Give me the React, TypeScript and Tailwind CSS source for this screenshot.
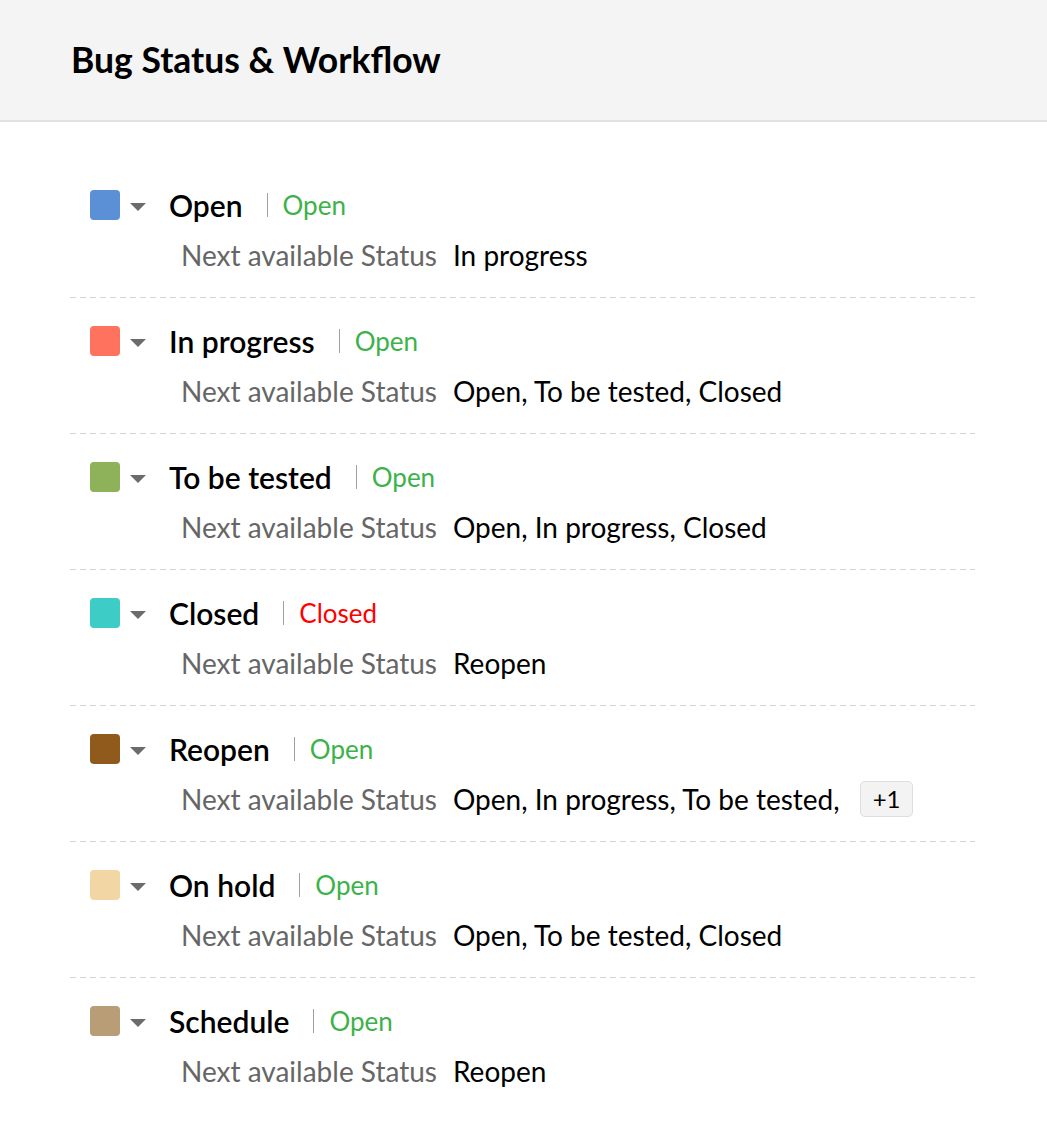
const statuses = [
  { name: 'Open', color: 'bg-[#5b8fd6]', type: 'Open', next: 'In progress' },
  { name: 'In progress', color: 'bg-[#ff735e]', type: 'Open', next: 'Open, To be tested, Closed' },
  { name: 'To be tested', color: 'bg-[#8eb25a]', type: 'Open', next: 'Open, In progress, Closed' },
  { name: 'Closed', color: 'bg-[#3dcdc6]', type: 'Closed', next: 'Reopen' },
  { name: 'Reopen', color: 'bg-[#8f5a1b]', type: 'Open', next: 'Open, In progress, To be tested,', more: 1 },
  { name: 'On hold', color: 'bg-[#f2d7a5]', type: 'Open', next: 'Open, To be tested, Closed' },
  { name: 'Schedule', color: 'bg-[#b89d76]', type: 'Open', next: 'Reopen' },
]

export default function App() {
  return (
    <div className="min-h-[1136px] bg-white font-['Lato','Noto_Sans',sans-serif] text-black">
      {/* header */}
      <div className="h-[122px] bg-[#f4f4f4] border-b-2 border-[#e2e2e2] flex items-center pl-[71px]">
        <h1 className="text-[35.5px] font-bold">Bug Status &amp; Workflow</h1>
      </div>

      {/* status list */}
      <div className="pt-[40px] pl-[70px] w-[975px]">
        {statuses.map((s, i) => (
          <div key={s.name}>
            <div className="pt-[27px] pb-[26px]">
              <div className="flex items-center h-[32px] pl-[20px]">
                <span className={`w-[30px] h-[30px] rounded-[4px] ${s.color}`}></span>
                <svg width="16" height="8" viewBox="0 0 16 8" className="ml-[10px] mt-[3px]">
                  <path d="M0 0 L16 0 L8 8 Z" fill="#6b6b6b" />
                </svg>
                <span className="ml-[23px] text-[30px] font-semibold">{s.name}</span>
                <span className="ml-[24px] w-[1px] h-[24px] bg-[#a0a0a0]"></span>
                <span className={`ml-[15px] text-[26px] ${s.type === 'Closed' ? 'text-[#ff0000]' : 'text-[#3cb249]'}`}>
                  {s.type}
                </span>
              </div>
              <div className="flex items-center h-[32px] mt-[18px] pl-[111px] text-[28px]">
                <span className="text-[#666666]">Next available Status</span>
                <span className="ml-[16px]">{s.next}</span>
                {s.more && (
                  <span className="ml-[20px] h-[36px] px-[12px] flex items-center rounded-[5px] bg-[#f3f3f3] border border-[#dedede] text-[24px]">
                    +{s.more}
                  </span>
                )}
              </div>
            </div>
            {i < statuses.length - 1 && (
              <div className="h-px bg-[repeating-linear-gradient(to_right,#d4d4d4_0_6px,transparent_6px_10px)]"></div>
            )}
          </div>
        ))}
      </div>
    </div>
  )
}
